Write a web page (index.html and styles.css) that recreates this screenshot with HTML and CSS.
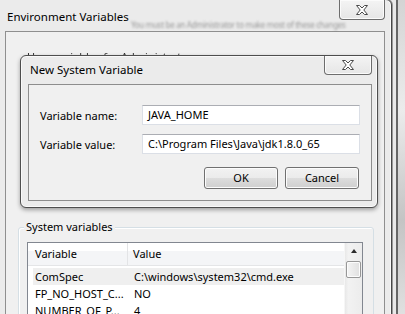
FILE: index.html
```html
<!DOCTYPE html>
<html>
    <head>
        <meta charset="utf-8" />
        <title>Environment Variables</title>
        <link rel="stylesheet" href="styles.css">
    </head>
    <body>
        <div class="desktop">
            <div class="back-window"></div>

            <div class="env-window">
                <div class="titlebar">
                    <span class="title">Environment Variables</span>
                    <div class="close-btn">
                        <svg width="12" height="10" viewBox="0 0 12 10">
                            <polygon points="0.5,0.5 3.5,0.5 6,3 8.5,0.5 11.5,0.5 7.8,5 11.5,9.5 8.5,9.5 6,7 3.5,9.5 0.5,9.5 4.2,5" fill="#fff" stroke="#4a4a4a" stroke-width="1" stroke-linejoin="round" />
                        </svg>
                    </div>
                </div>
                <div class="ghost-text">You must be an Administrator to make most of these changes</div>
                <div class="client">
                    <div class="user-caption">User variables for Administrator</div>
                    <div class="group">
                        <div class="group-title">System variables</div>
                        <div class="listview">
                            <div class="list-main">
                                <div class="list-header">
                                    <div class="col-var">Variable</div>
                                    <div class="col-val">Value</div>
                                </div>
                                <div class="list-row selected">
                                    <div class="cell-var">ComSpec</div>
                                    <div class="cell-val">C:\windows\system32\cmd.exe</div>
                                </div>
                                <div class="list-row">
                                    <div class="cell-var">FP_NO_HOST_C...</div>
                                    <div class="cell-val">NO</div>
                                </div>
                                <div class="list-row">
                                    <div class="cell-var">NUMBER_OF_P...</div>
                                    <div class="cell-val">4</div>
                                </div>
                            </div>
                            <div class="scrollbar">
                                <div class="arrow-box"><div class="arrow-up"></div></div>
                                <div class="thumb"></div>
                            </div>
                        </div>
                    </div>
                </div>
            </div>

            <div class="dialog">
                <div class="dialog-titlebar">
                    <span class="dialog-title">New System Variable</span>
                    <div class="close-btn small">
                        <svg width="12" height="10" viewBox="0 0 12 10">
                            <polygon points="0.5,0.5 3.5,0.5 6,3 8.5,0.5 11.5,0.5 7.8,5 11.5,9.5 8.5,9.5 6,7 3.5,9.5 0.5,9.5 4.2,5" fill="#fff" stroke="#4a4a4a" stroke-width="1" stroke-linejoin="round" />
                        </svg>
                    </div>
                </div>
                <div class="panel">
                    <div class="form">
                        <label class="field-label">Variable name:</label>
                        <div class="input">JAVA_HOME</div>
                        <label class="field-label">Variable value:</label>
                        <div class="input">C:\Program Files\Java\jdk1.8.0_65</div>
                    </div>
                    <div class="buttons">
                        <div class="btn">OK</div>
                        <div class="btn">Cancel</div>
                    </div>
                </div>
            </div>
        </div>
    </body>
</html>
```

FILE: styles.css
```css
body {
    margin: 0;
    font-family: "Noto Sans", "Liberation Sans", sans-serif;
    font-size: 11px;
    color: #000;
}
.desktop {
    position: relative;
    width: 405px;
    height: 314px;
    overflow: hidden;
    background: #e9e9e9;
}
.back-window {
    position: absolute;
    left: 396px;
    top: 0;
    width: 20px;
    height: 314px;
    border-left: 2px solid #666;
    background: linear-gradient(#d4d4d4, #ececec 35%, #c4c4c4 70%, #e0e0e0);
}
.env-window {
    position: absolute;
    left: -10px;
    top: -1px;
    width: 402px;
    height: 330px;
    box-sizing: border-box;
    border: 1px solid #474747;
    border-radius: 6px 6px 0 0;
    background: #ebebeb;
    box-shadow: inset -1px 0 #fafafa, 1px 0 #9a9a9a;
    padding: 0 6px 0 14px;
}
.titlebar {
    display: flex;
    justify-content: space-between;
    height: 31px;
}
.title {
    padding: 9px 0 0 2px;
    font-size: 11.5px;
    line-height: 16px;
}
.close-btn {
    width: 46px;
    height: 20px;
    box-sizing: border-box;
    border: 1px solid #6d6d6d;
    border-top: none;
    border-radius: 0 0 4px 4px;
    background: linear-gradient(#f4f4f4, #e6e6e6);
    box-shadow: inset 0 0 0 1px #fbfbfb;
    display: flex;
    align-items: center;
    justify-content: center;
}
.close-btn.small {
    width: 48px;
    height: 19px;
}
.ghost-text {
    position: absolute;
    left: 140px;
    top: 19px;
    font-size: 8px;
    letter-spacing: -0.3px;
    color: rgba(70, 70, 70, 0.5);
    filter: blur(1.3px);
    white-space: nowrap;
}
.client {
    height: 300px;
    border: 1px solid #8f8f8f;
    background: #f0f0f0;
}
.user-caption {
    margin: 18px 0 0 21px;
    line-height: 14px;
    color: #333;
    filter: blur(0.6px);
}
.group {
    margin: 163px 10px 0 12px;
    border: 1px solid #d5dfe5;
    border-radius: 3px;
    box-shadow: inset 1px 1px #fff;
    height: 120px;
}
.group-title {
    width: max-content;
    margin: -8px 0 0 5px;
    padding: 0 2px;
    line-height: 14px;
    background: #f0f0f0;
}
.listview {
    display: flex;
    margin: 8px 10px 0 8px;
    height: 100px;
    border: 1px solid #828790;
    background: #fff;
}
.list-main {
    flex: 1;
}
.list-header {
    display: flex;
    height: 22px;
    line-height: 22px;
    border-bottom: 1px solid #e4e5e7;
    background: linear-gradient(#fff 35%, #f4f5f7 35%);
}
.col-var {
    width: 100px;
    box-sizing: border-box;
    padding-left: 7px;
    border-right: 1px solid #e3e4e6;
}
.col-val {
    padding-left: 5px;
}
.list-row {
    display: flex;
    height: 17px;
    line-height: 17px;
    margin-left: 5px;
}
.list-row.selected {
    margin-top: 2px;
    background: #efefef;
}
.cell-var {
    width: 95px;
    box-sizing: border-box;
    padding-left: 2px;
}
.cell-val {
    padding-left: 6px;
}
.scrollbar {
    width: 17px;
    background: linear-gradient(90deg, #e8e8e8, #f2f2f2 20%, #ececec);
    border-left: 1px solid #f6f6f6;
}
.arrow-box {
    height: 16px;
    display: flex;
    justify-content: center;
    align-items: center;
}
.arrow-up {
    width: 0;
    height: 0;
    border-left: 3.5px solid transparent;
    border-right: 3.5px solid transparent;
    border-bottom: 4px solid #2b2b2b;
}
.thumb {
    margin: 2px 1px 0 1px;
    height: 15px;
    border: 1px solid #979797;
    border-radius: 2px;
    background: linear-gradient(90deg, #f4f4f4, #e0e0e0);
    box-shadow: inset 0 0 0 1px #fcfcfc;
}
.dialog {
    position: absolute;
    left: 20px;
    top: 55px;
    width: 358px;
    height: 153px;
    box-sizing: border-box;
    border: 1px solid #4e4e4e;
    border-radius: 6px;
    background: #ebebeb;
    box-shadow: inset 0 0 0 1px #f9f9f9, 0 2px 4px rgba(0, 0, 0, 0.35);
    padding: 0 5px 6px 7px;
    display: flex;
    flex-direction: column;
}
.dialog-titlebar {
    display: flex;
    justify-content: space-between;
    height: 28px;
}
.dialog-title {
    padding: 6px 0 0 2px;
    font-size: 11.5px;
    line-height: 16px;
}
.panel {
    flex: 1;
    border: 1px solid #8d8d8d;
    background: #f0f0f0;
    padding: 20px 11px 0 11px;
}
.form {
    display: grid;
    grid-template-columns: 102px 218px;
    grid-auto-rows: 20px;
    row-gap: 9px;
    align-items: center;
}
.input {
    height: 20px;
    box-sizing: border-box;
    border: 1px solid #dbdfe6;
    border-top-color: #abadb3;
    background: #fff;
    padding-left: 5px;
    line-height: 18px;
    white-space: nowrap;
}
.buttons {
    display: flex;
    justify-content: flex-end;
    gap: 7px;
    margin: 13px 1px 0 0;
}
.btn {
    width: 74px;
    height: 22px;
    box-sizing: border-box;
    border: 1px solid #707070;
    border-radius: 3px;
    background: linear-gradient(#f2f2f2, #ebebeb 50%, #dddddd 50%, #cfcfcf);
    box-shadow: inset 0 0 0 1px #fcfcfc;
    text-align: center;
    line-height: 20px;
}
```
